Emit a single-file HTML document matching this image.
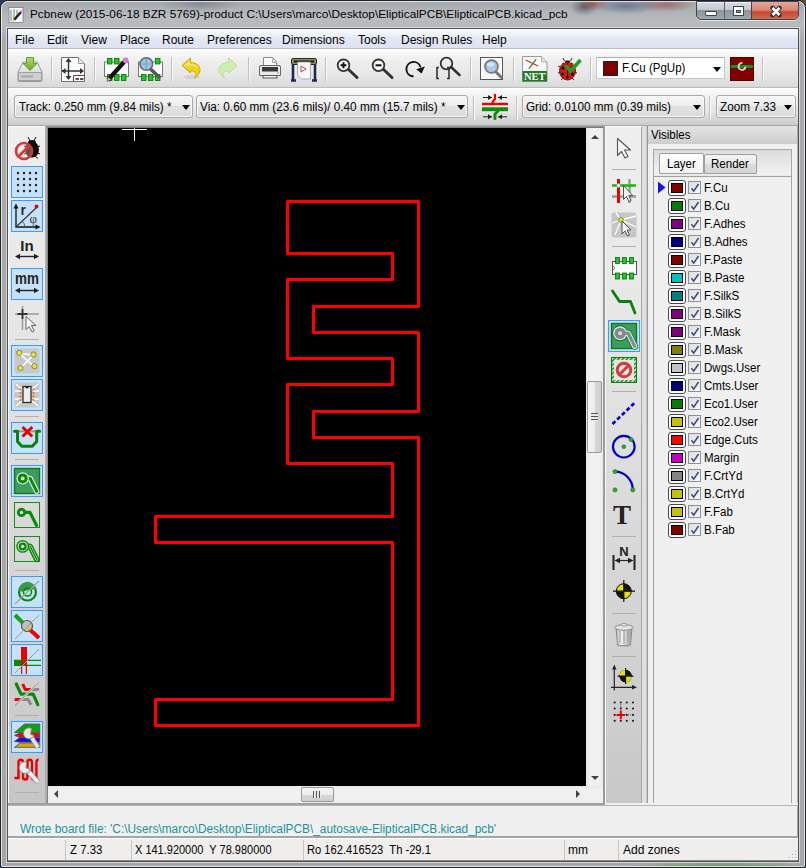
<!DOCTYPE html>
<html><head><meta charset="utf-8">
<style>
*{box-sizing:border-box;margin:0;padding:0}
html,body{width:806px;height:868px;overflow:hidden;background:linear-gradient(90deg,#24405e,#3a3a3a 50%,#6a4a30)}
body{position:relative;font-family:"Liberation Sans",sans-serif;font-size:12px;color:#000}
.a{position:absolute}
.t{position:absolute;white-space:pre;line-height:1}
svg{position:absolute;overflow:visible}
#frame{left:0;top:0;width:806px;height:868px;border-radius:8px 8px 3px 3px;border:1px solid #1e2226;
 background:
 radial-gradient(ellipse 14px 9px at 583px 6px,rgba(50,50,50,.55),rgba(50,50,50,0)),radial-gradient(ellipse 16px 7px at 592px 3px,rgba(160,60,60,.6),rgba(160,60,60,0)),radial-gradient(ellipse 35px 8px at 625px 5px,rgba(60,80,120,.55),rgba(60,80,120,0)),radial-gradient(ellipse 30px 7px at 665px 4px,rgba(150,60,60,.55),rgba(150,60,60,0)),
 radial-gradient(ellipse 40px 8px at 200px 3px,rgba(70,80,100,.35),rgba(70,80,100,0)),
 radial-gradient(ellipse 30px 6px at 760px 2px,rgba(150,60,50,.45),rgba(150,60,50,0)),
 radial-gradient(ellipse 90px 6px at 720px 866px,rgba(80,150,80,.8),rgba(80,150,80,0)),
 linear-gradient(180deg,#a4a8ad 0,#aeb2b6 10px,#b8bbbe 22px,#b4b7ba 28px,#a9a9a9 40px,#a6a6a6 100%)}
#frame2{left:1px;top:1px;width:804px;height:866px;border-radius:7px 7px 2px 2px;border:1px solid rgba(255,255,255,.7)}
#client{left:7px;top:28px;width:792px;height:834px;border:1px solid #505050;background:#f0f0f0;box-shadow:0 0 0 1px rgba(235,235,235,.7)}
#menubar{left:8px;top:29px;width:790px;height:20px;background:linear-gradient(180deg,#fbfcfe 0,#f0f3fa 25%,#e3e8f4 50%,#dce2f1 100%);border-bottom:1px solid #b6bcc8}
#tb1{left:8px;top:49px;width:790px;height:39px;background:linear-gradient(180deg,#fbfbfb 0,#f1f1f1 20%,#e6e6e6 70%,#d9d9d9 100%);border-top:1px solid #ffffff;border-bottom:1px solid #bcbcbc}
#tb2{left:8px;top:88px;width:790px;height:38px;background:linear-gradient(180deg,#fbfbfb 0,#f1f1f1 20%,#e4e4e4 65%,#cccccc 100%);border-top:1px solid #ffffff;border-bottom:1px solid #a8a8a8}
.sep{position:absolute;width:2px;border-left:1px solid #c0c0c0;border-right:1px solid #fbfbfb}
.hsep{position:absolute;height:1px;background:#b0b0b0}
.combo{position:absolute;height:23px;border:1px solid #a9a9a9;border-radius:3px;background:linear-gradient(180deg,#f6f6f6 0,#eeeeee 45%,#e2e2e2 50%,#dadada 100%);box-shadow:inset 0 0 0 1px #f8f8f8}
.combo .t{top:5px}
.arr{position:absolute;width:0;height:0;border-left:4px solid transparent;border-right:4px solid transparent;border-top:5px solid #000}
.combo .arr{margin-top:1px}
</style></head><body>
<div id="frame" class="a"></div>
<div id="frame2" class="a"></div>
<!-- title icon -->
<svg style="left:8px;top:7px" width="16" height="16" viewBox="0 0 16 16">
 <rect x="1" y="0.5" width="14" height="15" fill="#fafafa" stroke="#8a8f94" stroke-width="1"/>
 <path d="M3 3v11M6 2v10M9 3v5" stroke="#9aa" stroke-width="1.5"/>
 <path d="M6 13L13 5" stroke="#222" stroke-width="2.5"/>
 <circle cx="13.5" cy="4.5" r="1.2" fill="#e080e0"/>
 <circle cx="5.5" cy="13.5" r="1.2" fill="#e0e040"/>
</svg>
<div class="t" style="left:30px;top:9px;font-size:11.8px;color:#000;text-shadow:0 0 6px rgba(255,255,255,.5)">Pcbnew (2015-06-18 BZR 5769)-product C:\Users\marco\Desktop\ElipticalPCB\ElipticalPCB.kicad_pcb</div>
<!-- window buttons -->
<div class="a" style="left:696px;top:1px;width:103px;height:19px;border:1px solid #3e4650;border-radius:0 0 5px 5px;box-shadow:0 1px 0 rgba(255,255,255,.6),inset 0 1px 0 rgba(255,255,255,.6);overflow:hidden;background:linear-gradient(180deg,#d9dde2 0,#c4cad1 45%,#8d959e 50%,#9ea6ae 100%)">
 <div class="a" style="left:54px;top:0;width:47px;height:18px;border-radius:0 0 4px 0;background:linear-gradient(180deg,#e6a898 0,#d98676 45%,#c4482e 55%,#d47058 100%);border-left:1px solid #5b3a34"></div>
 <div class="a" style="left:27px;top:0;width:1px;height:18px;background:#5a6470"></div>
 <div class="a" style="left:8px;top:9px;width:12px;height:5px;background:#fff;border:1px solid #3a4450;border-radius:1px"></div>
 <div class="a" style="left:36px;top:4px;width:11px;height:10px;border:1px solid #3a4450;background:#fff"><div class="a" style="left:2px;top:3px;width:5px;height:3px;border:1px solid #3a4450;background:#9aa2aa"></div></div>
 <svg style="left:73px;top:4px" width="12" height="11" viewBox="0 0 12 11"><path d="M2.5 2L9.5 9M9.5 2L2.5 9" stroke="#3a3438" stroke-width="4.6" stroke-linecap="round"/><path d="M2.5 2L9.5 9M9.5 2L2.5 9" stroke="#fff" stroke-width="2.6" stroke-linecap="butt"/></svg>
</div>
<div id="client" class="a"></div>
<div id="menubar" class="a">
 <span class="t" style="left:7px;top:5px">File</span>
 <span class="t" style="left:39px;top:5px">Edit</span>
 <span class="t" style="left:73px;top:5px">View</span>
 <span class="t" style="left:112px;top:5px">Place</span>
 <span class="t" style="left:154px;top:5px">Route</span>
 <span class="t" style="left:199px;top:5px">Preferences</span>
 <span class="t" style="left:274px;top:5px">Dimensions</span>
 <span class="t" style="left:350px;top:5px">Tools</span>
 <span class="t" style="left:393px;top:5px">Design Rules</span>
 <span class="t" style="left:474px;top:5px">Help</span>
</div>
<div id="tb1" class="a"></div>
<div id="tb2" class="a"></div>
<!-- ===== toolbar 1 icons ===== -->
<!-- save -->
<svg style="left:16px;top:56px" width="28" height="26" viewBox="0 0 28 26">
 <defs><linearGradient id="gdisk" x1="0" y1="0" x2="0" y2="1"><stop offset="0" stop-color="#f4f4f4"/><stop offset="1" stop-color="#c9c9c9"/></linearGradient>
 <linearGradient id="garr" x1="0" y1="0" x2="0" y2="1"><stop offset="0" stop-color="#b6dc5c"/><stop offset="1" stop-color="#6aa82a"/></linearGradient></defs>
 <path d="M7 6h14l5 10v8.5q0 1-1 1H3q-1 0-1-1V16z" fill="url(#gdisk)" stroke="#9a9a9a" stroke-width="1"/>
 <path d="M2.5 16.5h23v8h-23z" fill="#cfcfcf" stroke="#a0a0a0" stroke-width="1"/>
 <rect x="5" y="19.5" width="12" height="2" fill="#a8a8a8"/>
 <path d="M10.5 1.5h7v6h3.5l-7 7l-7-7h3.5z" fill="url(#garr)" stroke="#6aa030" stroke-width="1"/>
</svg>
<div class="sep" style="left:51px;top:57px;height:24px"></div>
<!-- page settings -->
<svg style="left:60px;top:56px" width="26" height="27" viewBox="0 0 26 27">
 <path d="M1.5 1.5h17l6 6v18h-23z" fill="#fbfbfb" stroke="#707070" stroke-width="1"/>
 <path d="M18.5 1.5v6h6" fill="#e4e4e4" stroke="#9a9a9a" stroke-width="1"/>
 <path d="M8.5 3v20M2 15h21" stroke="#333" stroke-width="1.4"/>
 <path d="M8.5 2l-3 4h6zM8.5 24l-3-4h6zM1.5 15l4-3v6zM24 15l-4-3v6z" fill="#333"/>
 <path d="M13.5 25.5v-6h11" fill="none" stroke="#8a3030" stroke-width="1"/>
 <path d="M15.5 23h3.5M20 23h3.5" stroke="#222" stroke-width="1.3"/>
</svg>
<div class="sep" style="left:94px;top:57px;height:24px"></div>
<!-- module editor -->
<svg style="left:103px;top:56px" width="27" height="27" viewBox="0 0 27 27">
 <rect x="1.5" y="6" width="24" height="14.5" fill="#fff" stroke="#777" stroke-width="1"/>
 <g fill="#1ec81e" stroke="#0a6a0a" stroke-width=".8"><rect x="4.5" y="2.5" width="4.5" height="5.5"/><rect x="11.5" y="2.5" width="4.5" height="5.5"/><rect x="4.5" y="18.5" width="4.5" height="6"/><rect x="11.5" y="18.5" width="4.5" height="6"/><rect x="18.5" y="18.5" width="4.5" height="6"/></g>
 <path d="M5 24L21 6" stroke="#111" stroke-width="4.2"/>
 <path d="M4 25.5l1-4.5 3 2.5z" fill="#e8dc50" stroke="#555" stroke-width=".6"/>
 <circle cx="22.5" cy="4.5" r="2.6" fill="#e07ee0" stroke="#a050a0" stroke-width=".6"/>
</svg>
<!-- footprint viewer -->
<svg style="left:137px;top:56px" width="27" height="27" viewBox="0 0 27 27">
 <rect x="1.5" y="6" width="24" height="14.5" fill="#fff" stroke="#777" stroke-width="1"/>
 <g fill="#1ec81e" stroke="#0a6a0a" stroke-width=".8"><rect x="18.5" y="2.5" width="4.5" height="5.5"/><rect x="4.5" y="18.5" width="4.5" height="6"/><rect x="11.5" y="18.5" width="4.5" height="6"/><rect x="18.5" y="18.5" width="4.5" height="6"/></g>
 <path d="M14 13.5L22 21" stroke="#555" stroke-width="3.5" stroke-linecap="round"/>
 <circle cx="9.3" cy="8" r="6.3" fill="#9ec4e8" stroke="#666" stroke-width="1.6"/>
 <path d="M5 8h9M9.3 3v10" stroke="#55a888" stroke-width="1.2" opacity=".7"/>
</svg>
<div class="sep" style="left:171px;top:57px;height:24px"></div>
<!-- undo -->
<svg style="left:180px;top:56px" width="24" height="24" viewBox="0 0 24 24">
 <ellipse cx="12" cy="21" rx="8" ry="2" fill="#000" opacity=".08"/>
 <path d="M2 9.5L10.5 2v4.5c6 0 9.5 3.5 9.5 7.5c0 3-2 5.5-5.5 8c2-2.5 2.2-5-0.5-6.5c-1-.6-2.2-.8-3.5-.8V17z" fill="#f0d21a" stroke="#d4aa00" stroke-width="1"/>
 <path d="M4 9.5l6-5v3.5c5 0 8 2 8.5 4.5c-2-2-5-2.5-8.5-2.5z" fill="#fff3a0" opacity=".6"/>
</svg>
<!-- redo (disabled) -->
<svg style="left:215px;top:56px" width="24" height="24" viewBox="0 0 24 24">
 <path d="M22 9.5L13.5 2v4.5c-6 0-9.5 3.5-9.5 7.5c0 3 2 5.5 5.5 8c-2-2.5-2.2-5 .5-6.5c1-.6 2.2-.8 3.5-.8V17z" fill="#cdf0b0" stroke="#b6e09a" stroke-width="1"/>
</svg>
<div class="sep" style="left:248px;top:57px;height:24px"></div>
<!-- printer -->
<svg style="left:258px;top:56px" width="24" height="24" viewBox="0 0 24 24">
 <path d="M5.5 1.5h9l4 4v7h-13z" fill="#f8f8f8" stroke="#8a8a8a" stroke-width="1"/>
 <path d="M14.5 2.5v4h4" fill="#ddd" stroke="#999" stroke-width=".8"/>
  <path d="M1.5 11q0-1.5 1.5-1.5h18q1.5 0 1.5 1.5v8.5h-21z" fill="#e9e9e9" stroke="#666" stroke-width="1"/>
 <rect x="4" y="11" width="16" height="4.5" fill="#3a3a3a"/>
 <rect x="5" y="19.5" width="14" height="2.5" fill="#f2f2f2" stroke="#555" stroke-width="1"/>
 <circle cx="20" cy="17" r=".8" fill="#5c5"/>
</svg>
<!-- plotter -->
<svg style="left:290px;top:56px" width="28" height="26" viewBox="0 0 28 26">
 <rect x="1.5" y="2.5" width="25" height="6" rx="1.5" fill="#8e8c58" stroke="#2a2a10" stroke-width="1"/>
 <rect x="4" y="4.5" width="20" height="2" fill="#1a1a10"/>
 <path d="M3 8v16M25 8v16M1 24.5h5M22 24.5h5" stroke="#1c2a55" stroke-width="2.6"/>
 <path d="M7.5 6h13v17h-9l-4-4z" fill="#f8f8f8" stroke="#999" stroke-width=".8"/>
 <path d="M11 10l5 3l-5 3z" fill="none" stroke="#c44" stroke-width="1"/>
</svg>
<div class="sep" style="left:325px;top:57px;height:24px"></div>
<!-- zoom in -->
<svg style="left:336px;top:57px" width="24" height="23" viewBox="0 0 24 23">
 <path d="M12 12l9 8.5" stroke="#333" stroke-width="3" stroke-linecap="round"/>
 <circle cx="7.5" cy="8.3" r="5.8" fill="#fafafa" stroke="#333" stroke-width="1.8"/>
 <path d="M4.5 8.3h6M7.5 5.3v6" stroke="#111" stroke-width="2"/>
</svg>
<!-- zoom out -->
<svg style="left:371px;top:57px" width="24" height="23" viewBox="0 0 24 23">
 <path d="M12 12l9 8.5" stroke="#333" stroke-width="3" stroke-linecap="round"/>
 <circle cx="7.5" cy="8.3" r="5.8" fill="#fafafa" stroke="#333" stroke-width="1.8"/>
 <path d="M4.5 8.3h6" stroke="#111" stroke-width="2"/>
</svg>
<!-- redraw -->
<svg style="left:404px;top:57px" width="24" height="23" viewBox="0 0 24 23">
 <path d="M8.7 19.3A7.2 7.2 0 1 1 16.3 9.5" fill="none" stroke="#111" stroke-width="1.9" stroke-linecap="round"/>
 <path d="M12.2 12.2L20.9 9.6L17.6 16.5z" fill="#111"/>
</svg>
<!-- zoom auto -->
<svg style="left:435px;top:56px" width="27" height="24" viewBox="0 0 27 24">
 <path d="M16 11l8.5 8" stroke="#333" stroke-width="2.6" stroke-linecap="round"/>
 <circle cx="11.5" cy="7.5" r="5.8" fill="none" stroke="#333" stroke-width="1.8"/>
 <path d="M4 11.5h-2v11h2M12 11.5h2v11h-2" fill="none" stroke="#333" stroke-width="1.6"/>
</svg>
<div class="sep" style="left:470px;top:57px;height:24px"></div>
<!-- find -->
<svg style="left:479px;top:56px" width="26" height="26" viewBox="0 0 26 26">
 <rect x="1.5" y="1.5" width="22" height="22" fill="#f6f6f6" stroke="#555" stroke-width="1"/>
 <rect x="2.5" y="2.5" width="20" height="20" fill="none" stroke="#fff" stroke-width="1"/>
 <path d="M17 16l5.5 5.5" stroke="#777" stroke-width="3" stroke-linecap="round"/>
 <circle cx="12.5" cy="10.5" r="6.4" fill="#a9c8ea" stroke="#7a7a7a" stroke-width="1.8"/>
 <ellipse cx="11.5" cy="8.5" rx="3.5" ry="2" fill="#d6e6f6"/>
</svg>
<div class="sep" style="left:513px;top:57px;height:24px"></div>
<!-- netlist -->
<svg style="left:521px;top:55px" width="28" height="28" viewBox="0 0 28 28">
 <path d="M1.5 1.5h19l5.5 5.5v19.5h-24.5z" fill="#f8f8f8" stroke="#9a9a9a" stroke-width="1"/>
 <path d="M20.5 1.5v5.5h5.5" fill="#e0e0e0" stroke="#aaa" stroke-width=".8"/>
 <path d="M4.5 5l12.5 6M8 13.5l7-9" stroke="#c83030" stroke-width="1.1"/>
 <path d="M8 13.5l7-9" stroke="#2a9a2a" stroke-width="1.1"/>
 <rect x="1.5" y="16" width="24.5" height="10.5" fill="#267a26"/>
 <text x="13.8" y="25.3" text-anchor="middle" font-family="Liberation Serif" font-weight="bold" font-size="10.5" fill="#fff">NET</text>
</svg>
<!-- DRC ladybug -->
<svg style="left:556px;top:55px" width="27" height="27" viewBox="0 0 27 27">
 <path d="M7 3l2 4M16 3l-2 4M2 11l4 2M2 18l4-1M21 11l-4 2M21 18l-4-1M5 25l3-3M18 25l-3-3" stroke="#333" stroke-width="1"/>
 <ellipse cx="11.5" cy="8.5" rx="5" ry="3" fill="#111"/>
 <ellipse cx="11.5" cy="16" rx="8" ry="9" fill="#d21818" stroke="#600" stroke-width=".8"/>
 <path d="M11.5 8v16" stroke="#400" stroke-width=".8"/>
 <g fill="#111"><circle cx="7" cy="13" r="1.6"/><circle cx="16" cy="13" r="1.6"/><circle cx="6.5" cy="19" r="1.5"/><circle cx="16.5" cy="19" r="1.5"/><circle cx="11.5" cy="22" r="1.3"/></g>
 <ellipse cx="8" cy="7" rx="1.3" ry="1" fill="#eec"/><ellipse cx="15" cy="7" rx="1.3" ry="1" fill="#eec"/>
 <path d="M9.5 10.5l5 5.5l10-11" fill="none" stroke="#1ea01e" stroke-width="3.6"/>
</svg>
<div class="sep" style="left:590px;top:57px;height:24px"></div>
<!-- layer combo -->
<div class="a" style="left:596px;top:57px;width:129px;height:22px;background:#fff;border:1px solid #c8c8c8;border-top-color:#b0b0b0">
 <div class="a" style="left:6px;top:3px;width:15px;height:15px;background:#800000;border:1px solid #222"></div>
 <span class="t" style="left:25px;top:4px;transform:scaleX(.96);transform-origin:0 0">F.Cu (PgUp)</span>
 <div class="arr" style="left:116px;top:9px"></div>
</div>
<!-- via layer pair -->
<div class="a" style="left:730px;top:57px;width:24px;height:24px;background:#800000;border:1px solid #5a0000">
 <div class="a" style="left:0;top:7px;width:22px;height:3px;background:#0a9a0a"></div>
 <svg style="left:5px;top:3px" width="12" height="12" viewBox="0 0 12 12"><path d="M9.5 5.5A3.5 3.5 0 1 1 6.5 2" fill="none" stroke="#ddd" stroke-width="1.8"/></svg>
</div>
<div class="sep" style="left:762px;top:57px;height:24px"></div>
<!-- ===== toolbar 2 ===== -->
<div class="combo" style="left:14px;top:95px;width:179px">
 <span class="t" style="left:4px;top:5px;transform:scaleX(.972);transform-origin:0 0">Track: 0.250 mm (9.84 mils) *</span>
 <div class="arr" style="left:167px;top:8px"></div>
</div>
<div class="combo" style="left:196px;top:95px;width:272px">
 <span class="t" style="left:3px;top:5px;transform:scaleX(.98);transform-origin:0 0">Via: 0.60 mm (23.6 mils)/ 0.40 mm (15.7 mils) *</span>
 <div class="arr" style="left:260px;top:8px"></div>
</div>
<div class="sep" style="left:473px;top:96px;height:24px"></div>
<svg style="left:481px;top:93px" width="28" height="28" viewBox="0 0 28 28">
 <path d="M2 4.5h9M17 4.5h9M2 23.8h9M17 23.8h9" stroke="#222" stroke-width="1"/>
 <path d="M11 4.5l-4-2.5v5zM17 4.5l4-2.5v5zM11 23.8l-4-2.5v5zM17 23.8l4-2.5v5z" fill="#222"/>
 <path d="M14 1v5l-3 4" fill="none" stroke="#e00" stroke-width="2.2"/>
 <rect x="1" y="9.8" width="26" height="2.4" fill="#e00"/>
 <rect x="1" y="14.3" width="26" height="3.9" fill="#0a900a"/>
 <path d="M17 18l-3 3v4.5" fill="none" stroke="#0a900a" stroke-width="3" stroke-linecap="round"/>
</svg>
<div class="sep" style="left:516px;top:96px;height:24px"></div>
<div class="combo" style="left:522px;top:95px;width:183px">
 <span class="t" style="left:3px;top:5px;transform:scaleX(.975);transform-origin:0 0">Grid: 0.0100 mm (0.39 mils)</span>
 <div class="arr" style="left:170px;top:8px"></div>
</div>
<div class="sep" style="left:709px;top:96px;height:24px"></div>
<div class="combo" style="left:716px;top:95px;width:80px">
 <span class="t" style="left:3px;top:5px;transform:scaleX(.975);transform-origin:0 0">Zoom 7.33</span>
 <div class="arr" style="left:67px;top:8px"></div>
</div>
<!-- ===== left toolbar ===== -->
<div class="a" style="left:8px;top:126px;width:37px;height:677px;border-left:1px solid #fafafa;border-top:1px solid #fcfcfc;background:linear-gradient(180deg,#efefef 0,#e6e6e6 30%,#c6c6c6 100%)"></div>
<div class="a" style="left:45px;top:126px;width:3px;height:677px;background:linear-gradient(90deg,#b0b0b0,#a8a8a8 60%,#6a6a6a)"></div>
<!-- toggled boxes -->
<div class="a" style="left:11px;top:166px;width:32px;height:32px;background:#c6e1fa;border:1px solid #3a9cf8"></div>
<div class="a" style="left:11px;top:200px;width:32px;height:32px;background:#c6e1fa;border:1px solid #3a9cf8"></div>
<div class="a" style="left:11px;top:268px;width:32px;height:32px;background:#c6e1fa;border:1px solid #3a9cf8"></div>
<div class="a" style="left:11px;top:345px;width:32px;height:32px;background:#c6e1fa;border:1px solid #3a9cf8"></div>
<div class="a" style="left:11px;top:379px;width:32px;height:32px;background:#c6e1fa;border:1px solid #3a9cf8"></div>
<div class="a" style="left:11px;top:422px;width:32px;height:32px;background:#c6e1fa;border:1px solid #3a9cf8"></div>
<div class="a" style="left:11px;top:465px;width:32px;height:32px;background:#c6e1fa;border:1px solid #3a9cf8"></div>
<div class="a" style="left:11px;top:576px;width:32px;height:32px;background:#c6e1fa;border:1px solid #3a9cf8"></div>
<div class="a" style="left:11px;top:610px;width:32px;height:32px;background:#c6e1fa;border:1px solid #3a9cf8"></div>
<div class="a" style="left:11px;top:644px;width:32px;height:32px;background:#c6e1fa;border:1px solid #3a9cf8"></div>
<div class="a" style="left:11px;top:721px;width:32px;height:32px;background:#c6e1fa;border:1px solid #3a9cf8"></div>
<!-- separators -->
<div class="hsep" style="left:15px;top:339px;width:24px"></div>
<div class="hsep" style="left:15px;top:416px;width:24px"></div>
<div class="hsep" style="left:15px;top:459px;width:24px"></div>
<div class="hsep" style="left:15px;top:570px;width:24px"></div>
<div class="hsep" style="left:15px;top:715px;width:24px"></div>
<div class="hsep" style="left:15px;top:792px;width:24px"></div>
<!-- 1 DRC off -->
<svg style="left:13px;top:134px" width="28" height="28" viewBox="0 0 28 28">
 <path d="M15 3l2 4M23 3l-2 4M11 12l3 1M11 20l3-1M27 12l-3 1M27 20l-3-1M14 24.5l3-2.5M25 24.5l-3-2.5" stroke="#111" stroke-width="1"/>
 <ellipse cx="19" cy="8.5" rx="4" ry="2.5" fill="#111"/>
 <ellipse cx="19" cy="15.5" rx="7" ry="8" fill="#0c0c0c"/>
 <circle cx="11" cy="17" r="8" fill="#f4dada" fill-opacity=".35" stroke="#d03a3a" stroke-width="2.6"/>
 <path d="M5.5 22.5L16.5 11.5" stroke="#d03a3a" stroke-width="2.6"/>
</svg>
<!-- 2 grid -->
<svg style="left:11px;top:166px" width="32" height="32" viewBox="0 0 32 32">
 <g fill="#222"><circle cx="7" cy="7" r="1.2"/><circle cx="13" cy="7" r="1.2"/><circle cx="19" cy="7" r="1.2"/><circle cx="25" cy="7" r="1.2"/>
 <circle cx="7" cy="13" r="1.2"/><circle cx="13" cy="13" r="1.2"/><circle cx="19" cy="13" r="1.2"/><circle cx="25" cy="13" r="1.2"/>
 <circle cx="7" cy="19" r="1.2"/><circle cx="13" cy="19" r="1.2"/><circle cx="19" cy="19" r="1.2"/><circle cx="25" cy="19" r="1.2"/>
 <circle cx="7" cy="25" r="1.2"/><circle cx="13" cy="25" r="1.2"/><circle cx="19" cy="25" r="1.2"/><circle cx="25" cy="25" r="1.2"/></g>
</svg>
<!-- 3 polar -->
<svg style="left:11px;top:200px" width="32" height="32" viewBox="0 0 32 32">
 <path d="M5 6v21h22" fill="none" stroke="#111" stroke-width="1.3"/>
 <path d="M5 3.5l-2.5 5h5zM29.5 27l-5-2.5v5z" fill="#111"/>
 <path d="M5 27L25 8" stroke="#333" stroke-width="1.1"/>
 <path d="M14 27a9 9 0 0 0 -3-6" fill="none" stroke="#444" stroke-width=".8"/>
 <circle cx="25.5" cy="6.5" r="2" fill="#e00"/>
 <text x="9.5" y="15" font-family="Liberation Sans" font-weight="bold" font-size="14" fill="#333">r</text>
 <text x="18.5" y="22.5" font-family="Liberation Serif" font-size="13" fill="#333">φ</text>
</svg>
<!-- 4 In -->
<svg style="left:11px;top:234px" width="32" height="32" viewBox="0 0 32 32">
 <text x="16" y="17" text-anchor="middle" font-family="Liberation Sans" font-weight="bold" font-size="15" fill="#222">In</text>
 <path d="M6 22.5h20" stroke="#222" stroke-width="1.4"/><path d="M4 22.5l5-2.8v5.6zM28 22.5l-5-2.8v5.6z" fill="#222"/>
</svg>
<!-- 5 mm -->
<svg style="left:11px;top:268px" width="32" height="32" viewBox="0 0 32 32">
 <text x="16" y="16" text-anchor="middle" font-family="Liberation Sans" font-weight="bold" font-size="16" fill="#222" transform="translate(16 0) scale(.84 1) translate(-16 0)">mm</text>
 <path d="M6 22.5h20" stroke="#222" stroke-width="1.4"/><path d="M4 22.5l5-2.8v5.6zM28 22.5l-5-2.8v5.6z" fill="#222"/>
</svg>
<!-- 6 cursor shape -->
<svg style="left:11px;top:302px" width="32" height="32" viewBox="0 0 32 32">
 <path d="M4 12h24M11.5 4v24" stroke="#9a9a9a" stroke-width="1.5"/>
 <path d="M6.5 12h10M11.5 7v10" stroke="#333" stroke-width="1.8"/>
 <path d="M15 14.5v13l3.2-3l2.8 5.5l2.2-1.1l-2.8-5.4h4.6z" fill="#f8f8f8" stroke="#666" stroke-width="1"/>
</svg>
<!-- 7 ratsnest -->
<svg style="left:11px;top:345px" width="32" height="32" viewBox="0 0 32 32">
 <rect x="3.5" y="3.5" width="25" height="25" rx="3" fill="#c8c8c8"/>
 <path d="M8 8.5L24 22M9 23.5L23 9.5M8 8.5l15 1.5" stroke="#fff" stroke-width="1.6"/>
 <g fill="#e3ec1a" stroke="#555" stroke-width=".6"><circle cx="8.3" cy="8" r="2.6"/><circle cx="22.5" cy="9.5" r="2.6"/><circle cx="9.5" cy="23" r="2.6"/><circle cx="23.5" cy="21.2" r="2.6"/></g>
</svg>
<!-- 8 module ratsnest -->
<svg style="left:11px;top:379px" width="32" height="32" viewBox="0 0 32 32">
 <rect x="3.5" y="3.5" width="25" height="25" rx="2" fill="#c8c8c8"/>
 <path d="M5 5l8 7M27 5l-8 7M5 27l8-7M27 27l-8-7M4 12h6M4 20h6M22 12h6M22 20h6" stroke="#fff" stroke-width="1.4"/>
 <rect x="12" y="7.5" width="8" height="16" fill="#eee" stroke="#222" stroke-width="1.2"/>
 <rect x="14.5" y="7.5" width="3" height="1.8" fill="#222"/>
 <g fill="#e87020"><circle cx="9.5" cy="10.5" r="1.1"/><circle cx="9.5" cy="14" r="1.1"/><circle cx="9.5" cy="17.5" r="1.1"/><circle cx="9.5" cy="21" r="1.1"/><circle cx="22.5" cy="10.5" r="1.1"/><circle cx="22.5" cy="14" r="1.1"/><circle cx="22.5" cy="17.5" r="1.1"/><circle cx="22.5" cy="21" r="1.1"/></g>
</svg>
<!-- 9 auto delete -->
<svg style="left:11px;top:422px" width="32" height="32" viewBox="0 0 32 32">
 <path d="M4 9.3h24" stroke="#9a9a9a" stroke-width="2"/>
 <path d="M3.5 9.3h3v10.2l4.3 4.8h10.5l4.4-4.8v-10.2h2.9" fill="none" stroke="#0a820a" stroke-width="3" stroke-linejoin="round" stroke-linecap="round"/>
 <path d="M11.5 5l9.8 9.5M21.3 5l-9.8 9.5" stroke="#e80000" stroke-width="3"/>
</svg>
<!-- 10 pads sketch (toggled) -->
<svg style="left:11px;top:465px" width="32" height="32" viewBox="0 0 32 32">
 <rect x="3.5" y="3.5" width="25" height="25" fill="#3f9c5c" stroke="#107a20" stroke-width="1.4"/>
 <path d="M11.7 13.4h7.5l6.5 13" fill="none" stroke="#dff0e0" stroke-width="5.4" stroke-linecap="round" stroke-linejoin="round"/>
 <path d="M11.7 13.4h7.5l6.5 13" fill="none" stroke="#0a8a0a" stroke-width="3" stroke-linecap="round" stroke-linejoin="round"/>
 <circle cx="11.7" cy="13.4" r="6.2" fill="#dff0e0"/>
 <circle cx="11.7" cy="13.4" r="5" fill="#0a8a0a"/>
 <circle cx="11.7" cy="13.4" r="1.9" fill="#dff0e0"/>
</svg>
<!-- 11 vias sketch -->
<svg style="left:11px;top:499px" width="32" height="32" viewBox="0 0 32 32">
 <rect x="3.5" y="3.5" width="25" height="25" fill="none" stroke="#1a8a1a" stroke-width="1"/>
 <path d="M10.5 13.4h8.5l6.5 13" fill="none" stroke="#0a8a0a" stroke-width="3.2" stroke-linecap="round" stroke-linejoin="round"/>
 <circle cx="10.5" cy="13.4" r="4.6" fill="#0a8a0a"/><circle cx="10.5" cy="13.4" r="1.7" fill="#e4e4e4"/>
</svg>
<!-- 12 tracks sketch -->
<svg style="left:11px;top:533px" width="32" height="32" viewBox="0 0 32 32">
 <rect x="3.5" y="3.5" width="25" height="25" fill="none" stroke="#1a8a1a" stroke-width="1"/>
 <path d="M11.7 13.4h7.5l6.5 13" fill="none" stroke="#0a8a0a" stroke-width="5.6" stroke-linecap="round" stroke-linejoin="round"/>
 <path d="M11.7 13.4h7.5l6.5 13" fill="none" stroke="#e2e2e2" stroke-width="2.6" stroke-linecap="round" stroke-linejoin="round"/>
 <path d="M11.7 13.4h7.5l6.5 13" fill="none" stroke="#0a8a0a" stroke-width="1.4" stroke-linecap="round" stroke-linejoin="round"/>
 <circle cx="11.7" cy="13.4" r="6.4" fill="#0a8a0a"/>
 <circle cx="11.7" cy="13.4" r="5" fill="#e2e2e2"/>
 <circle cx="11.7" cy="13.4" r="4" fill="#0a8a0a"/>
 <circle cx="11.7" cy="13.4" r="1.7" fill="#e2e2e2"/>
</svg>
<!-- 13 zones -->
<svg style="left:11px;top:576px" width="32" height="32" viewBox="0 0 32 32">
 <circle cx="16.5" cy="16" r="8.5" fill="none" stroke="#0a8a0a" stroke-width="2.2"/>
 <path d="M8 16a8.5 8.5 0 0 1 17 -3" fill="#3a9a4a"/>
 <circle cx="16.5" cy="16" r="4" fill="none" stroke="#0a8a0a" stroke-width="1.6"/>
 <path d="M4 28L28 5" stroke="#a0a0a0" stroke-width="1.1"/>
</svg>
<!-- 14 -->
<svg style="left:11px;top:610px" width="32" height="32" viewBox="0 0 32 32">
 <path d="M4 5l12 12" stroke="#1aa01a" stroke-width="4"/>
 <path d="M16 17l12 11" stroke="#e00" stroke-width="4"/>
 <circle cx="16" cy="16" r="5.5" fill="#c0c0c0" stroke="#555" stroke-width="1.2"/>
 <circle cx="17.5" cy="18" r="2" fill="#cccc30"/>
 <path d="M4 29L28 5" stroke="#999" stroke-width="1"/>
</svg>
<!-- 15 -->
<svg style="left:11px;top:644px" width="32" height="32" viewBox="0 0 32 32">
 <rect x="10" y="3" width="6" height="18" fill="#e00"/>
 <rect x="3" y="16" width="7" height="5.5" fill="#0a8a0a"/>
 <path d="M3 16.3h27M3 21.3h27" stroke="#0a8a0a" stroke-width="1.2"/>
 <path d="M10.6 20v10M15.4 20v10" stroke="#e00" stroke-width="1.2"/>
 <path d="M4 29L28 5" stroke="#999" stroke-width="1"/>
</svg>
<!-- 16 -->
<svg style="left:11px;top:678px" width="32" height="32" viewBox="0 0 32 32">
 <path d="M20.1 11.5H28.1M10 21.4H17.1L20.1 26.7" fill="none" stroke="#8a8a8a" stroke-width="3" stroke-linejoin="round"/>
 <path d="M11.7 6L14.2 11.5H20.1M3.6 21.4H10" fill="none" stroke="#e00" stroke-width="3" stroke-linejoin="round"/>
 <path d="M5.3 6L10 16.1H22.2L26.8 26.7" fill="none" stroke="#0a8a0a" stroke-width="3.2" stroke-linecap="round" stroke-linejoin="round"/>
 <path d="M4.1 27.5L27.7 4.3" stroke="#e8e8e8" stroke-width="2.2"/>
 <path d="M4.1 27.5L27.7 4.3" stroke="#999" stroke-width="1.1"/>
</svg>
<!-- 17 layer manager -->
<svg style="left:11px;top:721px" width="32" height="32" viewBox="0 0 32 32">
 <path d="M8.7 22H28.8V26.4H3.4z" fill="#dba400" stroke="#555" stroke-width=".8"/>
 <path d="M8.7 16.4H28.8V21.2H8.7L3.4 20.4z" fill="#1010e8" stroke="#555" stroke-width=".8"/>
 <path d="M8.7 12H28.8V16.4H8.7L3.4 14.3z" fill="#e80808" stroke="#555" stroke-width=".8"/>
 <path d="M13.5 3H28.8V11.5H3.4z" fill="#10a010" stroke="#555" stroke-width=".8"/>
 <path d="M19 14L27 26.5" stroke="#8a8a8a" stroke-width="5"/>
 <path d="M19 14L27 26.5" stroke="#e4e4e4" stroke-width="3.4"/>
 <path d="M20.5 7.5A5.5 5.5 0 1 0 23 14.5L19.5 13.5z" fill="#e6e6e6" stroke="#8a8a8a" stroke-width="1"/>
</svg>
<!-- 18 microwave -->
<svg style="left:11px;top:755px" width="32" height="32" viewBox="0 0 32 32">
 <path d="M3.4 23H7.5V7q0-2.2 2.2-2.2T12 7v15.5q0 2 2.2 2t2.2-2V7q0-2.2 2.2-2.2T21 7v15.5q0 2 2.2 2t2.2-2V7q0-2.2 2.2-2.2" fill="none" stroke="#e80000" stroke-width="2.4"/>
 <path d="M15 14L27 27" stroke="#8a8a8a" stroke-width="5.4"/>
 <path d="M15 14L27 27" stroke="#ececec" stroke-width="3.8"/>
 <path d="M15.5 7A5.8 5.8 0 1 0 19.5 14.5L15 13z" fill="#ececec" stroke="#8a8a8a" stroke-width="1"/>
</svg>
<!-- ===== canvas ===== -->
<div class="a" style="left:48px;top:126px;width:555px;height:2px;background:linear-gradient(180deg,#a8a8a8,#6a6a6a)"></div>
<div class="a" style="left:48px;top:128px;width:538px;height:658px;background:#000"></div>
<svg style="left:48px;top:128px" width="538" height="658" viewBox="48 128 538 658">
 <path d="M287.5 201.5H418.5V306.5H313.5V332.5H418.5V411.5H313.5V437.5H418.5V725.5H155.5V699.5H392.5V542.5H155.5V516.5H392.5V463.5H287.5V384.5H392.5V358.5H287.5V279.5H392.5V253.5H287.5Z" fill="none" stroke="#ff0000" stroke-width="3" stroke-linejoin="round"/>
 <path d="M122 129.5H147M134.5 128V141" stroke="#fff" stroke-width="1"/>
</svg>
<!-- vertical scrollbar -->
<div class="a" style="left:586px;top:128px;width:17px;height:658px;background:linear-gradient(90deg,#e9e9e9,#f1f1f1 30%,#f1f1f1 70%,#ececec)"></div>
<div class="a" style="left:587px;top:381px;width:15px;height:72px;border:1px solid #9a9a9a;border-radius:2px;background:linear-gradient(90deg,#f4f4f4 0,#ececec 50%,#d8d8d8 51%,#d0d0d0 100%)"></div>
<div class="a" style="left:591px;top:413px;width:7px;height:8px;background:repeating-linear-gradient(180deg,#555 0,#555 1px,#e8e8e8 1px,#e8e8e8 3px)"></div>
<div class="a" style="left:591px;top:135px;width:0;height:0;border-left:4px solid transparent;border-right:4px solid transparent;border-bottom:4px solid #444"></div>
<div class="a" style="left:591px;top:776px;width:0;height:0;border-left:4px solid transparent;border-right:4px solid transparent;border-top:4px solid #444"></div>
<div class="a" style="left:603px;top:126px;width:2px;height:677px;background:#9a9a9a"></div>
<!-- horizontal scrollbar -->
<div class="a" style="left:48px;top:786px;width:555px;height:17px;background:linear-gradient(180deg,#e9e9e9,#f1f1f1 30%,#f1f1f1 70%,#ececec)"></div>
<div class="a" style="left:301px;top:787px;width:33px;height:15px;border:1px solid #9a9a9a;border-radius:2px;background:linear-gradient(180deg,#f4f4f4 0,#ececec 50%,#d8d8d8 51%,#d0d0d0 100%)"></div>
<div class="a" style="left:313px;top:791px;width:8px;height:7px;background:repeating-linear-gradient(90deg,#555 0,#555 1px,#e8e8e8 1px,#e8e8e8 3px)"></div>
<div class="a" style="left:54px;top:790px;width:0;height:0;border-top:4px solid transparent;border-bottom:4px solid transparent;border-right:4px solid #444"></div>
<div class="a" style="left:576px;top:790px;width:0;height:0;border-top:4px solid transparent;border-bottom:4px solid transparent;border-left:4px solid #444"></div>
<div class="a" style="left:8px;top:803px;width:597px;height:2px;background:#a0a0a0"></div>
<!-- ===== right toolbar ===== -->
<div class="a" style="left:605px;top:126px;width:37px;height:677px;border-left:1px solid #fafafa;border-top:1px solid #fcfcfc;border-right:1px solid #a8a8a8;background:linear-gradient(180deg,#efefef 0,#e6e6e6 30%,#c8c8c8 100%)"></div>
<div class="a" style="left:642px;top:126px;width:5px;height:677px;background:linear-gradient(90deg,#dedede 0,#e2e2e2 80%,#a8a8a8 100%)"></div>
<div class="a" style="left:608px;top:320px;width:32px;height:32px;background:#c6e1fa;border:1px solid #3a9cf8"></div>
<div class="hsep" style="left:612px;top:169px;width:24px"></div>
<div class="hsep" style="left:612px;top:246px;width:24px"></div>
<div class="hsep" style="left:612px;top:391px;width:24px"></div>
<div class="hsep" style="left:612px;top:536px;width:24px"></div>
<div class="hsep" style="left:612px;top:613px;width:24px"></div>
<div class="hsep" style="left:612px;top:656px;width:24px"></div>
<!-- select -->
<svg style="left:612px;top:136px" width="24" height="24" viewBox="0 0 24 24">
 <path d="M5.5 2.5v17l4-4l3.5 6.5l3-1.5l-3.5-6.5h6z" fill="#f4f4f4" stroke="#555" stroke-width="1.1" stroke-linejoin="round"/>
</svg>
<!-- highlight net -->
<svg style="left:610px;top:176px" width="28" height="30" viewBox="0 0 28 30">
 <path d="M2 20.5h24M19.5 3v24" stroke="#999" stroke-width="2.4"/>
 <path d="M8.5 3v24" stroke="#e00" stroke-width="3"/>
 <path d="M2 9.5h24" stroke="#10c010" stroke-width="2.6"/>
 <circle cx="8.5" cy="9.5" r="2" fill="#fff" stroke="#888" stroke-width=".8"/>
 <path d="M13.5 9.5v14l3-3l2.5 5l2.2-1.2l-2.5-4.8h4z" fill="#f4f4f4" stroke="#555" stroke-width="1"/>
</svg>
<!-- local ratsnest -->
<svg style="left:611px;top:212px" width="26" height="26" viewBox="0 0 26 26">
 <rect x="0.5" y="0.5" width="25" height="25" rx="2.5" fill="#c6c6c6"/>
 <path d="M10 8L4 23M10 8L25 4M10 8l15 7M10 8L1 11M10 8L5 1" stroke="#fff" stroke-width="1.3"/>
 <circle cx="10" cy="8" r="2.5" fill="#dde81a" stroke="#555" stroke-width=".6"/>
 <path d="M11 9v13l3-3l2.5 5l2-1l-2.5-5h4z" fill="#f4f4f4" stroke="#555" stroke-width="1"/>
</svg>
<!-- module -->
<svg style="left:611px;top:256px" width="27" height="25" viewBox="0 0 27 25">
 <rect x="1.5" y="5.5" width="24" height="13" fill="#fff" stroke="#555" stroke-width="1"/>
 <g fill="#1ec81e" stroke="#0a6a0a" stroke-width=".8"><rect x="4.5" y="1.5" width="4" height="6"/><rect x="11.5" y="1.5" width="4" height="6"/><rect x="18.5" y="1.5" width="4" height="6"/><rect x="4.5" y="17" width="4" height="6"/><rect x="11.5" y="17" width="4" height="6"/><rect x="18.5" y="17" width="4" height="6"/></g>
 <path d="M1.5 10a2 2 0 0 1 0 4" fill="none" stroke="#555" stroke-width=".8"/>
</svg>
<!-- track -->
<svg style="left:610px;top:288px" width="28" height="28" viewBox="0 0 28 28">
 <path d="M2.5 3l7 10.5h11l4.5 11.5" fill="none" stroke="#0a820a" stroke-width="2.8" stroke-linecap="round" stroke-linejoin="round"/>
</svg>
<!-- via (toggled) -->
<svg style="left:608px;top:320px" width="32" height="32" viewBox="0 0 32 32">
 <rect x="3.5" y="3.5" width="25" height="25" fill="#3f9c5c" stroke="#107a20" stroke-width="1.4"/>
 <path d="M12.1 13.3h8.2l6.3 12.9" fill="none" stroke="#0a7a0a" stroke-width="7" stroke-linecap="round" stroke-linejoin="round"/>
 <circle cx="12.1" cy="13.3" r="8" fill="#0a7a0a"/>
 <path d="M12.1 13.3h8.2l6.3 12.9" fill="none" stroke="#c6e1fa" stroke-width="5.4" stroke-linecap="round" stroke-linejoin="round"/>
 <circle cx="12.1" cy="13.3" r="7" fill="#c6e1fa"/>
 <path d="M12.1 13.3h8.2l6.3 12.9" fill="none" stroke="#888" stroke-width="3" stroke-linecap="round" stroke-linejoin="round"/>
 <circle cx="12.1" cy="13.3" r="5.6" fill="#888"/>
 <circle cx="12.1" cy="13.3" r="2" fill="#c6e1fa"/>
</svg>
<!-- keepout -->
<svg style="left:611px;top:357px" width="26" height="26" viewBox="0 0 26 26">
 <defs><pattern id="hatch" width="3" height="3" patternUnits="userSpaceOnUse" patternTransform="rotate(45)"><rect width="1.5" height="3" fill="#0a8a0a"/></pattern></defs>
 <rect x="0.5" y="0.5" width="25" height="25" fill="#eef4ee" stroke="#0a7a0a" stroke-width="1"/>
 <rect x="1" y="1" width="24" height="24" fill="url(#hatch)"/>
 <rect x="3" y="3" width="20" height="20" fill="#e6e6e6"/>
 <circle cx="13" cy="13" r="6.8" fill="#e8e8e8" stroke="#d83838" stroke-width="3"/>
 <path d="M8.2 17.8L17.8 8.2" stroke="#d83838" stroke-width="3"/>
</svg>
<!-- dashed line -->
<svg style="left:610px;top:399px" width="28" height="28" viewBox="0 0 28 28">
 <path d="M2.5 25L25.5 3" stroke="#0000d8" stroke-width="2.6" stroke-dasharray="4 2.5"/>
</svg>
<!-- circle -->
<svg style="left:610px;top:433px" width="28" height="28" viewBox="0 0 28 28">
 <circle cx="13.8" cy="13.7" r="10.8" fill="none" stroke="#0000d0" stroke-width="2.2"/>
 <circle cx="13.8" cy="13.7" r="2" fill="#2ea82e" stroke="#186a18" stroke-width=".5"/>
 <circle cx="21.1" cy="6.6" r="2.1" fill="#2ea82e" stroke="#186a18" stroke-width=".5"/>
</svg>
<!-- arc -->
<svg style="left:610px;top:467px" width="28" height="28" viewBox="0 0 28 28">
 <path d="M5 4.6A17.8 18.3 0 0 1 22.8 22.9" fill="none" stroke="#0000d0" stroke-width="2.2"/>
 <circle cx="5" cy="4.6" r="2.1" fill="#2ea82e" stroke="#186a18" stroke-width=".5"/>
 <circle cx="5" cy="22.9" r="2.1" fill="#2ea82e" stroke="#186a18" stroke-width=".5"/>
 <circle cx="22.8" cy="22.9" r="2.1" fill="#2ea82e" stroke="#186a18" stroke-width=".5"/>
</svg>
<!-- text T -->
<div class="t" style="left:613px;top:502px;font-family:'Liberation Serif';font-weight:bold;font-size:27px;color:#222">T</div>
<!-- dimension -->
<svg style="left:610px;top:544px" width="28" height="28" viewBox="0 0 28 28">
 <text x="14" y="12" text-anchor="middle" font-family="Liberation Sans" font-weight="bold" font-size="13" fill="#222">N</text>
 <path d="M3.5 11v15M24.5 11v15" stroke="#222" stroke-width="2"/>
 <path d="M6 16.5h16" stroke="#222" stroke-width="1.1"/>
 <path d="M4.5 16.5l5.5-2.8v5.6zM23.5 16.5l-5.5-2.8v5.6z" fill="#222"/>
</svg>
<!-- target -->
<svg style="left:612px;top:579px" width="24" height="24" viewBox="0 0 24 24">
 <circle cx="11.8" cy="12.2" r="7.5" fill="#111"/>
 <path d="M11.8 4.7A7.5 7.5 0 0 0 4.3 12.2H11.8zM11.8 19.7A7.5 7.5 0 0 0 19.3 12.2H11.8z" fill="#e6e000"/>
 <circle cx="11.8" cy="12.2" r="7.5" fill="none" stroke="#111" stroke-width="1"/>
 <path d="M1 12.2h22M11.8 1v22" stroke="#111" stroke-width="1.2"/>
</svg>
<!-- trash (disabled) -->
<svg style="left:612px;top:622px" width="24" height="26" viewBox="0 0 24 26">
 <defs><linearGradient id="gtr" x1="0" y1="0" x2="1" y2="0"><stop offset="0" stop-color="#b8b8b8"/><stop offset=".35" stop-color="#f2f2f2"/><stop offset="1" stop-color="#9c9c9c"/></linearGradient></defs>
 <ellipse cx="12" cy="23" rx="8" ry="2" fill="#888" opacity=".3"/>
 <path d="M4 6l1.5 16q.2 1.5 6.5 1.5t6.5-1.5L20 6z" fill="url(#gtr)" stroke="#8a8a8a" stroke-width="1"/>
 <path d="M8 9v12M12 9v13M16 9v12" stroke="#a0a0a0" stroke-width="1.1"/>
 <ellipse cx="12" cy="5.5" rx="9" ry="2.8" fill="#e4e4e4" stroke="#8a8a8a" stroke-width="1"/>
 <rect x="9.5" y="1.5" width="5" height="2.5" rx="1" fill="#e0e0e0" stroke="#8a8a8a" stroke-width=".8"/>
</svg>
<!-- origin -->
<svg style="left:609px;top:663px" width="30" height="30" viewBox="0 0 30 30">
 <path d="M5.3 4v23.5M2 24.3h24" stroke="#222" stroke-width="1.2"/>
 <path d="M5.3 1.5l-2.2 5h4.4zM28 24.3l-5-2.2v4.4z" fill="#222"/>
 <circle cx="16.6" cy="13.1" r="6.3" fill="#111"/>
 <path d="M16.6 6.8A6.3 6.3 0 0 0 10.3 13.1H16.6zM16.6 19.4A6.3 6.3 0 0 0 22.9 13.1H16.6z" fill="#e6e000"/>
 <path d="M8.5 13.1h16M16.6 5v16" stroke="#111" stroke-width="1.1"/>
</svg>
<!-- grid origin -->
<svg style="left:610px;top:698px" width="28" height="28" viewBox="0 0 28 28">
 <g fill="#222"><circle cx="4.7" cy="4.5" r="1.1"/><circle cx="10.8" cy="4.5" r="1.1"/><circle cx="16.8" cy="4.5" r="1.1"/><circle cx="23" cy="4.5" r="1.1"/>
 <circle cx="4.7" cy="10.5" r="1.1"/><circle cx="10.8" cy="10.5" r="1.1"/><circle cx="16.8" cy="10.5" r="1.1"/><circle cx="23" cy="10.5" r="1.1"/>
 <circle cx="4.7" cy="16.9" r="1.1"/><circle cx="16.8" cy="16.9" r="1.1"/><circle cx="23" cy="16.9" r="1.1"/>
 <circle cx="4.7" cy="22.8" r="1.1"/><circle cx="10.8" cy="22.8" r="1.1"/><circle cx="16.8" cy="22.8" r="1.1"/><circle cx="23" cy="22.8" r="1.1"/></g>
 <path d="M10.8 6v5M12 16.9h4M18 16.9h4" stroke="#222" stroke-width=".8" stroke-dasharray="1 1"/>
 <path d="M6.5 16.9h8.6M10.8 12.5v8.8" stroke="#e00" stroke-width="2"/>
</svg>
<!-- ===== visibles panel ===== -->
<div class="a" style="left:647px;top:126px;width:151px;height:677px;background:#f0f0f0;border-left:1px solid #9a9a9a;border-right:1px solid #b0b0b0"></div>
<div class="a" style="left:648px;top:126px;width:149px;height:18px;background:linear-gradient(180deg,#e4e4e4 0,#d8d8d8 50%,#cdcdcd 100%)"></div>
<span class="t" style="left:651px;top:129px;transform:scaleX(.96);transform-origin:0 0">Visibles</span>
<div class="a" style="left:653px;top:149px;width:139px;height:654px;border:1px solid #a8a8a8;border-bottom:none;background:linear-gradient(180deg,#dcdcdc 0,#f2f2f2 24px,#e0e0e0 27px)"></div>
<div class="a" style="left:653px;top:176px;width:139px;height:627px;border-top:1px solid #a0a0a0;border-left:1px solid #a0a0a0;border-right:1px solid #a8a8a8;background:#f0f0f0"></div>
<div class="a" style="left:704px;top:154px;width:53px;height:20px;border:1px solid #a0a0a0;border-radius:2px 2px 0 0;background:linear-gradient(180deg,#f4f4f4 0,#e8e8e8 50%,#dcdcdc 51%,#d6d6d6 100%)"></div>
<div class="a" style="left:659px;top:153px;width:45px;height:21px;border:1px solid #a0a0a0;border-radius:2px 2px 0 0;background:linear-gradient(180deg,#ffffff,#f2f2f2)"></div>
<span class="t" style="left:667px;top:158px;transform:scaleX(.96);transform-origin:0 0">Layer</span>
<span class="t" style="left:711px;top:158px;transform:scaleX(.96);transform-origin:0 0">Render</span>
<svg style="left:657px;top:181px" width="9" height="13" viewBox="0 0 9 13"><path d="M1 0.5L8.5 6.5L1 12.5z" fill="#1414e8"/></svg>

<div class="a" style="left:668px;top:180px;width:18px;height:16px;border:1px solid #4a4a4a;border-radius:3px;background:#f4f4f4;box-shadow:inset 0 0 0 1px #fff"><div class="a" style="left:2px;top:2px;width:12px;height:10px;background:#800000;border:1px solid #000"></div></div>
<div class="a" style="left:688px;top:181px;width:13px;height:13px;border:1px solid #8e8f8f;background:linear-gradient(135deg,#dcdcdc,#fafafa)"><svg style="left:1px;top:1px" width="10" height="10" viewBox="0 0 10 10"><path d="M1.5 5.2l2.2 3l4.8-7.2" fill="none" stroke="#3b4f8a" stroke-width="1.6"/></svg></div>
<span class="t" style="left:704px;top:182px;transform:scaleX(.96);transform-origin:0 0">F.Cu</span>
<div class="a" style="left:668px;top:198px;width:18px;height:16px;border:1px solid #4a4a4a;border-radius:3px;background:#f4f4f4;box-shadow:inset 0 0 0 1px #fff"><div class="a" style="left:2px;top:2px;width:12px;height:10px;background:#008000;border:1px solid #000"></div></div>
<div class="a" style="left:688px;top:199px;width:13px;height:13px;border:1px solid #8e8f8f;background:linear-gradient(135deg,#dcdcdc,#fafafa)"><svg style="left:1px;top:1px" width="10" height="10" viewBox="0 0 10 10"><path d="M1.5 5.2l2.2 3l4.8-7.2" fill="none" stroke="#3b4f8a" stroke-width="1.6"/></svg></div>
<span class="t" style="left:704px;top:200px;transform:scaleX(.96);transform-origin:0 0">B.Cu</span>
<div class="a" style="left:668px;top:216px;width:18px;height:16px;border:1px solid #4a4a4a;border-radius:3px;background:#f4f4f4;box-shadow:inset 0 0 0 1px #fff"><div class="a" style="left:2px;top:2px;width:12px;height:10px;background:#800080;border:1px solid #000"></div></div>
<div class="a" style="left:688px;top:217px;width:13px;height:13px;border:1px solid #8e8f8f;background:linear-gradient(135deg,#dcdcdc,#fafafa)"><svg style="left:1px;top:1px" width="10" height="10" viewBox="0 0 10 10"><path d="M1.5 5.2l2.2 3l4.8-7.2" fill="none" stroke="#3b4f8a" stroke-width="1.6"/></svg></div>
<span class="t" style="left:704px;top:218px;transform:scaleX(.96);transform-origin:0 0">F.Adhes</span>
<div class="a" style="left:668px;top:234px;width:18px;height:16px;border:1px solid #4a4a4a;border-radius:3px;background:#f4f4f4;box-shadow:inset 0 0 0 1px #fff"><div class="a" style="left:2px;top:2px;width:12px;height:10px;background:#000080;border:1px solid #000"></div></div>
<div class="a" style="left:688px;top:235px;width:13px;height:13px;border:1px solid #8e8f8f;background:linear-gradient(135deg,#dcdcdc,#fafafa)"><svg style="left:1px;top:1px" width="10" height="10" viewBox="0 0 10 10"><path d="M1.5 5.2l2.2 3l4.8-7.2" fill="none" stroke="#3b4f8a" stroke-width="1.6"/></svg></div>
<span class="t" style="left:704px;top:236px;transform:scaleX(.96);transform-origin:0 0">B.Adhes</span>
<div class="a" style="left:668px;top:252px;width:18px;height:16px;border:1px solid #4a4a4a;border-radius:3px;background:#f4f4f4;box-shadow:inset 0 0 0 1px #fff"><div class="a" style="left:2px;top:2px;width:12px;height:10px;background:#800000;border:1px solid #000"></div></div>
<div class="a" style="left:688px;top:253px;width:13px;height:13px;border:1px solid #8e8f8f;background:linear-gradient(135deg,#dcdcdc,#fafafa)"><svg style="left:1px;top:1px" width="10" height="10" viewBox="0 0 10 10"><path d="M1.5 5.2l2.2 3l4.8-7.2" fill="none" stroke="#3b4f8a" stroke-width="1.6"/></svg></div>
<span class="t" style="left:704px;top:254px;transform:scaleX(.96);transform-origin:0 0">F.Paste</span>
<div class="a" style="left:668px;top:270px;width:18px;height:16px;border:1px solid #4a4a4a;border-radius:3px;background:#f4f4f4;box-shadow:inset 0 0 0 1px #fff"><div class="a" style="left:2px;top:2px;width:12px;height:10px;background:#00c2c2;border:1px solid #000"></div></div>
<div class="a" style="left:688px;top:271px;width:13px;height:13px;border:1px solid #8e8f8f;background:linear-gradient(135deg,#dcdcdc,#fafafa)"><svg style="left:1px;top:1px" width="10" height="10" viewBox="0 0 10 10"><path d="M1.5 5.2l2.2 3l4.8-7.2" fill="none" stroke="#3b4f8a" stroke-width="1.6"/></svg></div>
<span class="t" style="left:704px;top:272px;transform:scaleX(.96);transform-origin:0 0">B.Paste</span>
<div class="a" style="left:668px;top:288px;width:18px;height:16px;border:1px solid #4a4a4a;border-radius:3px;background:#f4f4f4;box-shadow:inset 0 0 0 1px #fff"><div class="a" style="left:2px;top:2px;width:12px;height:10px;background:#008080;border:1px solid #000"></div></div>
<div class="a" style="left:688px;top:289px;width:13px;height:13px;border:1px solid #8e8f8f;background:linear-gradient(135deg,#dcdcdc,#fafafa)"><svg style="left:1px;top:1px" width="10" height="10" viewBox="0 0 10 10"><path d="M1.5 5.2l2.2 3l4.8-7.2" fill="none" stroke="#3b4f8a" stroke-width="1.6"/></svg></div>
<span class="t" style="left:704px;top:290px;transform:scaleX(.96);transform-origin:0 0">F.SilkS</span>
<div class="a" style="left:668px;top:306px;width:18px;height:16px;border:1px solid #4a4a4a;border-radius:3px;background:#f4f4f4;box-shadow:inset 0 0 0 1px #fff"><div class="a" style="left:2px;top:2px;width:12px;height:10px;background:#800080;border:1px solid #000"></div></div>
<div class="a" style="left:688px;top:307px;width:13px;height:13px;border:1px solid #8e8f8f;background:linear-gradient(135deg,#dcdcdc,#fafafa)"><svg style="left:1px;top:1px" width="10" height="10" viewBox="0 0 10 10"><path d="M1.5 5.2l2.2 3l4.8-7.2" fill="none" stroke="#3b4f8a" stroke-width="1.6"/></svg></div>
<span class="t" style="left:704px;top:308px;transform:scaleX(.96);transform-origin:0 0">B.SilkS</span>
<div class="a" style="left:668px;top:324px;width:18px;height:16px;border:1px solid #4a4a4a;border-radius:3px;background:#f4f4f4;box-shadow:inset 0 0 0 1px #fff"><div class="a" style="left:2px;top:2px;width:12px;height:10px;background:#800080;border:1px solid #000"></div></div>
<div class="a" style="left:688px;top:325px;width:13px;height:13px;border:1px solid #8e8f8f;background:linear-gradient(135deg,#dcdcdc,#fafafa)"><svg style="left:1px;top:1px" width="10" height="10" viewBox="0 0 10 10"><path d="M1.5 5.2l2.2 3l4.8-7.2" fill="none" stroke="#3b4f8a" stroke-width="1.6"/></svg></div>
<span class="t" style="left:704px;top:326px;transform:scaleX(.96);transform-origin:0 0">F.Mask</span>
<div class="a" style="left:668px;top:342px;width:18px;height:16px;border:1px solid #4a4a4a;border-radius:3px;background:#f4f4f4;box-shadow:inset 0 0 0 1px #fff"><div class="a" style="left:2px;top:2px;width:12px;height:10px;background:#808000;border:1px solid #000"></div></div>
<div class="a" style="left:688px;top:343px;width:13px;height:13px;border:1px solid #8e8f8f;background:linear-gradient(135deg,#dcdcdc,#fafafa)"><svg style="left:1px;top:1px" width="10" height="10" viewBox="0 0 10 10"><path d="M1.5 5.2l2.2 3l4.8-7.2" fill="none" stroke="#3b4f8a" stroke-width="1.6"/></svg></div>
<span class="t" style="left:704px;top:344px;transform:scaleX(.96);transform-origin:0 0">B.Mask</span>
<div class="a" style="left:668px;top:360px;width:18px;height:16px;border:1px solid #4a4a4a;border-radius:3px;background:#f4f4f4;box-shadow:inset 0 0 0 1px #fff"><div class="a" style="left:2px;top:2px;width:12px;height:10px;background:#c2c2c2;border:1px solid #000"></div></div>
<div class="a" style="left:688px;top:361px;width:13px;height:13px;border:1px solid #8e8f8f;background:linear-gradient(135deg,#dcdcdc,#fafafa)"><svg style="left:1px;top:1px" width="10" height="10" viewBox="0 0 10 10"><path d="M1.5 5.2l2.2 3l4.8-7.2" fill="none" stroke="#3b4f8a" stroke-width="1.6"/></svg></div>
<span class="t" style="left:704px;top:362px;transform:scaleX(.96);transform-origin:0 0">Dwgs.User</span>
<div class="a" style="left:668px;top:378px;width:18px;height:16px;border:1px solid #4a4a4a;border-radius:3px;background:#f4f4f4;box-shadow:inset 0 0 0 1px #fff"><div class="a" style="left:2px;top:2px;width:12px;height:10px;background:#000080;border:1px solid #000"></div></div>
<div class="a" style="left:688px;top:379px;width:13px;height:13px;border:1px solid #8e8f8f;background:linear-gradient(135deg,#dcdcdc,#fafafa)"><svg style="left:1px;top:1px" width="10" height="10" viewBox="0 0 10 10"><path d="M1.5 5.2l2.2 3l4.8-7.2" fill="none" stroke="#3b4f8a" stroke-width="1.6"/></svg></div>
<span class="t" style="left:704px;top:380px;transform:scaleX(.96);transform-origin:0 0">Cmts.User</span>
<div class="a" style="left:668px;top:396px;width:18px;height:16px;border:1px solid #4a4a4a;border-radius:3px;background:#f4f4f4;box-shadow:inset 0 0 0 1px #fff"><div class="a" style="left:2px;top:2px;width:12px;height:10px;background:#008000;border:1px solid #000"></div></div>
<div class="a" style="left:688px;top:397px;width:13px;height:13px;border:1px solid #8e8f8f;background:linear-gradient(135deg,#dcdcdc,#fafafa)"><svg style="left:1px;top:1px" width="10" height="10" viewBox="0 0 10 10"><path d="M1.5 5.2l2.2 3l4.8-7.2" fill="none" stroke="#3b4f8a" stroke-width="1.6"/></svg></div>
<span class="t" style="left:704px;top:398px;transform:scaleX(.96);transform-origin:0 0">Eco1.User</span>
<div class="a" style="left:668px;top:414px;width:18px;height:16px;border:1px solid #4a4a4a;border-radius:3px;background:#f4f4f4;box-shadow:inset 0 0 0 1px #fff"><div class="a" style="left:2px;top:2px;width:12px;height:10px;background:#c2c200;border:1px solid #000"></div></div>
<div class="a" style="left:688px;top:415px;width:13px;height:13px;border:1px solid #8e8f8f;background:linear-gradient(135deg,#dcdcdc,#fafafa)"><svg style="left:1px;top:1px" width="10" height="10" viewBox="0 0 10 10"><path d="M1.5 5.2l2.2 3l4.8-7.2" fill="none" stroke="#3b4f8a" stroke-width="1.6"/></svg></div>
<span class="t" style="left:704px;top:416px;transform:scaleX(.96);transform-origin:0 0">Eco2.User</span>
<div class="a" style="left:668px;top:432px;width:18px;height:16px;border:1px solid #4a4a4a;border-radius:3px;background:#f4f4f4;box-shadow:inset 0 0 0 1px #fff"><div class="a" style="left:2px;top:2px;width:12px;height:10px;background:#ff0000;border:1px solid #000"></div></div>
<div class="a" style="left:688px;top:433px;width:13px;height:13px;border:1px solid #8e8f8f;background:linear-gradient(135deg,#dcdcdc,#fafafa)"><svg style="left:1px;top:1px" width="10" height="10" viewBox="0 0 10 10"><path d="M1.5 5.2l2.2 3l4.8-7.2" fill="none" stroke="#3b4f8a" stroke-width="1.6"/></svg></div>
<span class="t" style="left:704px;top:434px;transform:scaleX(.96);transform-origin:0 0">Edge.Cuts</span>
<div class="a" style="left:668px;top:450px;width:18px;height:16px;border:1px solid #4a4a4a;border-radius:3px;background:#f4f4f4;box-shadow:inset 0 0 0 1px #fff"><div class="a" style="left:2px;top:2px;width:12px;height:10px;background:#c200c2;border:1px solid #000"></div></div>
<div class="a" style="left:688px;top:451px;width:13px;height:13px;border:1px solid #8e8f8f;background:linear-gradient(135deg,#dcdcdc,#fafafa)"><svg style="left:1px;top:1px" width="10" height="10" viewBox="0 0 10 10"><path d="M1.5 5.2l2.2 3l4.8-7.2" fill="none" stroke="#3b4f8a" stroke-width="1.6"/></svg></div>
<span class="t" style="left:704px;top:452px;transform:scaleX(.96);transform-origin:0 0">Margin</span>
<div class="a" style="left:668px;top:468px;width:18px;height:16px;border:1px solid #4a4a4a;border-radius:3px;background:#f4f4f4;box-shadow:inset 0 0 0 1px #fff"><div class="a" style="left:2px;top:2px;width:12px;height:10px;background:#848484;border:1px solid #000"></div></div>
<div class="a" style="left:688px;top:469px;width:13px;height:13px;border:1px solid #8e8f8f;background:linear-gradient(135deg,#dcdcdc,#fafafa)"><svg style="left:1px;top:1px" width="10" height="10" viewBox="0 0 10 10"><path d="M1.5 5.2l2.2 3l4.8-7.2" fill="none" stroke="#3b4f8a" stroke-width="1.6"/></svg></div>
<span class="t" style="left:704px;top:470px;transform:scaleX(.96);transform-origin:0 0">F.CrtYd</span>
<div class="a" style="left:668px;top:486px;width:18px;height:16px;border:1px solid #4a4a4a;border-radius:3px;background:#f4f4f4;box-shadow:inset 0 0 0 1px #fff"><div class="a" style="left:2px;top:2px;width:12px;height:10px;background:#c2c200;border:1px solid #000"></div></div>
<div class="a" style="left:688px;top:487px;width:13px;height:13px;border:1px solid #8e8f8f;background:linear-gradient(135deg,#dcdcdc,#fafafa)"><svg style="left:1px;top:1px" width="10" height="10" viewBox="0 0 10 10"><path d="M1.5 5.2l2.2 3l4.8-7.2" fill="none" stroke="#3b4f8a" stroke-width="1.6"/></svg></div>
<span class="t" style="left:704px;top:488px;transform:scaleX(.96);transform-origin:0 0">B.CrtYd</span>
<div class="a" style="left:668px;top:504px;width:18px;height:16px;border:1px solid #4a4a4a;border-radius:3px;background:#f4f4f4;box-shadow:inset 0 0 0 1px #fff"><div class="a" style="left:2px;top:2px;width:12px;height:10px;background:#c2c200;border:1px solid #000"></div></div>
<div class="a" style="left:688px;top:505px;width:13px;height:13px;border:1px solid #8e8f8f;background:linear-gradient(135deg,#dcdcdc,#fafafa)"><svg style="left:1px;top:1px" width="10" height="10" viewBox="0 0 10 10"><path d="M1.5 5.2l2.2 3l4.8-7.2" fill="none" stroke="#3b4f8a" stroke-width="1.6"/></svg></div>
<span class="t" style="left:704px;top:506px;transform:scaleX(.96);transform-origin:0 0">F.Fab</span>
<div class="a" style="left:668px;top:522px;width:18px;height:16px;border:1px solid #4a4a4a;border-radius:3px;background:#f4f4f4;box-shadow:inset 0 0 0 1px #fff"><div class="a" style="left:2px;top:2px;width:12px;height:10px;background:#800000;border:1px solid #000"></div></div>
<div class="a" style="left:688px;top:523px;width:13px;height:13px;border:1px solid #8e8f8f;background:linear-gradient(135deg,#dcdcdc,#fafafa)"><svg style="left:1px;top:1px" width="10" height="10" viewBox="0 0 10 10"><path d="M1.5 5.2l2.2 3l4.8-7.2" fill="none" stroke="#3b4f8a" stroke-width="1.6"/></svg></div>
<span class="t" style="left:704px;top:524px;transform:scaleX(.96);transform-origin:0 0">B.Fab</span>
<!-- ===== message & status ===== -->
<div class="a" style="left:8px;top:805px;width:790px;height:32px;background:#f0f0f0;border-top:1px solid #b4b4b4;border-right:1px solid #a8a8a8"></div>
<span class="t" style="left:20px;top:823px;color:#17949c;transform:scaleX(.988);transform-origin:0 0">Wrote board file: 'C:\Users\marco\Desktop\ElipticalPCB\_autosave-ElipticalPCB.kicad_pcb'</span>
<div class="a" style="left:8px;top:836px;width:790px;height:2px;background:#a4a4a4"></div>
<div class="a" style="left:8px;top:838px;width:790px;height:23px;background:#f0eeed;border-top:1px solid #fff;border-bottom:1px solid #8a8a8a"></div>
<div class="a" style="left:65px;top:840px;width:1px;height:20px;background:#c8c6c4"></div>
<div class="a" style="left:131px;top:840px;width:1px;height:20px;background:#c8c6c4"></div>
<div class="a" style="left:303px;top:840px;width:1px;height:20px;background:#c8c6c4"></div>
<div class="a" style="left:564px;top:840px;width:1px;height:20px;background:#c8c6c4"></div>
<div class="a" style="left:618px;top:840px;width:1px;height:20px;background:#c8c6c4"></div>
<span class="t" style="left:70px;top:844px;transform:scaleX(.95);transform-origin:0 0">Z 7.33</span>
<span class="t" style="left:135px;top:844px;transform:scaleX(.916);transform-origin:0 0">X 141.920000  Y 78.980000</span>
<span class="t" style="left:307px;top:844px;transform:scaleX(.93);transform-origin:0 0">Ro 162.416523  Th -29.1</span>
<span class="t" style="left:568px;top:844px">mm</span>
<span class="t" style="left:623px;top:844px">Add zones</span>
<svg style="left:786px;top:848px" width="12" height="12" viewBox="0 0 12 12"><g fill="#fff"><rect x="10" y="4" width="1" height="1"/><rect x="7" y="7" width="1" height="1"/><rect x="10" y="7" width="1" height="1"/><rect x="4" y="10" width="1" height="1"/><rect x="7" y="10" width="1" height="1"/><rect x="10" y="10" width="1" height="1"/></g><g fill="#a8a8a8"><rect x="9" y="3" width="1" height="1"/><rect x="6" y="6" width="1" height="1"/><rect x="9" y="6" width="1" height="1"/><rect x="3" y="9" width="1" height="1"/><rect x="6" y="9" width="1" height="1"/><rect x="9" y="9" width="1" height="1"/></g></svg>
</body></html>
